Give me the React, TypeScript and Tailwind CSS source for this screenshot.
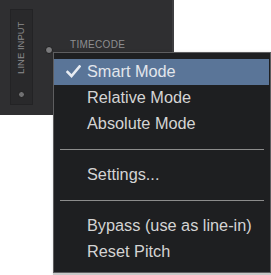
const font = { fontFamily: '"Liberation Sans", Arial, sans-serif' };

function MenuRow({ label, active }: { label: string; active?: boolean }) {
  return (
    <div
      className={`relative flex h-[26px] items-center pb-[2px] pl-[33px] mr-[1px] text-[16.3px] leading-none ${
        active ? 'bg-[#5a7598] text-[#e2e6ec]' : 'text-[#d4d4d4]'
      }`}
    >
      {active && (
        <svg className="absolute left-[12px] top-[6px]" width="15" height="13" viewBox="0 0 15 13">
          <path d="M1.5 7 L5.5 11 L13.5 1.5" fill="none" stroke="#e8ecf2" strokeWidth="2.6" strokeLinecap="square" />
        </svg>
      )}
      <span>{label}</span>
    </div>
  );
}

function Separator() {
  return (
    <div className="flex h-[25px] items-center px-[6px]">
      <div className="h-px w-full bg-[#8c8c8c]" />
    </div>
  );
}

export default function App() {
  return (
    <div className="relative h-[275px] w-[271px] overflow-hidden bg-white" style={font}>
      <div className="flex h-[115px] w-[174px] items-start gap-[12px] border-r-2 border-[#3e3e40] bg-[#2f2f31] pl-[10px] pt-[9px]">
        <div className="flex h-[96px] w-[23px] flex-col items-center border border-[#232325] bg-[#29292b]">
          <div className="flex h-[75px] items-center justify-center">
            <span className="block -rotate-90 whitespace-nowrap text-[9.5px] leading-none text-[#8b8b8d]">
              LINE INPUT
            </span>
          </div>
          <div className="mt-[6px] h-[7px] w-[7px] rounded-full border border-[#1c1c1d] bg-[#707072]" />
        </div>
        <div className="mt-[31px] flex items-start gap-[17px]">
          <div className="mt-[6px] h-[8px] w-[8px] rounded-full border border-[#1c1c1d] bg-[#7a7a7c]" />
          <span className="text-[10px] leading-none tracking-[0.3px] text-[#8e8e90]">TIMECODE</span>
        </div>
      </div>

      <div className="absolute left-[53px] top-[52px] h-[221px] w-[218px] border border-[#5e5e60] bg-[#1e1f21] pt-[6px] shadow-[2px_2px_4px_rgba(0,0,0,0.4)]">
        <MenuRow label="Smart Mode" active />
        <MenuRow label="Relative Mode" />
        <MenuRow label="Absolute Mode" />
        <Separator />
        <MenuRow label="Settings..." />
        <Separator />
        <MenuRow label="Bypass (use as line-in)" />
        <MenuRow label="Reset Pitch" />
      </div>
      <div className="absolute left-[53px] top-[273px] h-[2px] w-[218px] bg-[#c8c8c8]" />
    </div>
  );
}
